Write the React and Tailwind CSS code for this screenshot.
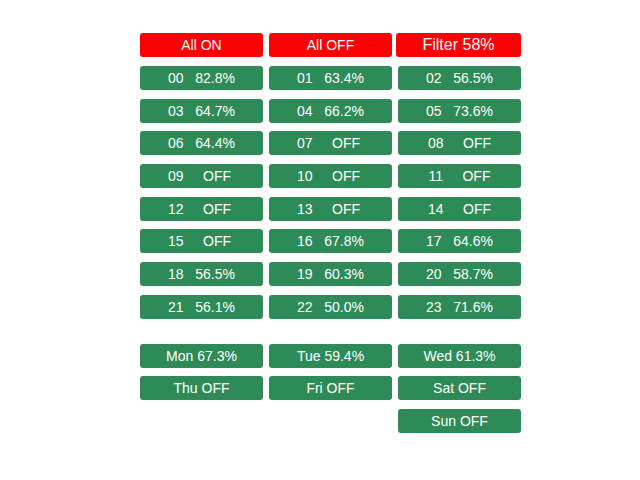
const hours = [
  ["00", "82.8%"], ["01", "63.4%"], ["02", "56.5%"],
  ["03", "64.7%"], ["04", "66.2%"], ["05", "73.6%"],
  ["06", "64.4%"], ["07", "OFF"], ["08", "OFF"],
  ["09", "OFF"], ["10", "OFF"], ["11", "OFF"],
  ["12", "OFF"], ["13", "OFF"], ["14", "OFF"],
  ["15", "OFF"], ["16", "67.8%"], ["17", "64.6%"],
  ["18", "56.5%"], ["19", "60.3%"], ["20", "58.7%"],
  ["21", "56.1%"], ["22", "50.0%"], ["23", "71.6%"],
];

const days = [
  "Mon 67.3%", "Tue 59.4%", "Wed 61.3%",
  "Thu OFF", "Fri OFF", "Sat OFF",
];

// label padding: percentages get 3 spaces, OFF gets a wider gap
function hourLabel(num, val, col) {
  if (val === "OFF") {
    return col === 2 ? `${num}     OFF` : `${num}     OFF `;
  }
  return `${num}   ${val}`;
}

const Cell = ({ children }) => (
  <div className="h-[24px] rounded-[3px] bg-[#2e8b57] text-white text-[14px] leading-none flex items-center justify-center whitespace-pre">
    {children}
  </div>
);

const App = () => {
  return (
    <div className="w-[640px] h-[480px] bg-white pt-[33px] pl-[140px] font-['Liberation_Sans',Arial,sans-serif]">
      {/* Top controls */}
      <div className="grid grid-cols-[123px_123px_123px] gap-x-[6px]">
        <button className="h-[24px] rounded-[3px] bg-[#ff0000] text-white text-[14px] leading-none flex items-center justify-center">
          All ON
        </button>
        <button className="h-[24px] rounded-[3px] bg-[#ff0000] text-white text-[14px] leading-none flex items-center justify-center">
          All OFF
        </button>
        <button className="h-[24px] -ml-[2px] rounded-[3px] bg-[#ff0000] text-white text-[16px] leading-none flex items-center justify-center">
          Filter 58%
        </button>
      </div>

      {/* Hours */}
      <div className="grid grid-cols-[123px_123px_123px] gap-x-[6px] gap-y-[8.7px] mt-[9px]">
        {hours.map(([num, val], i) => (
          <Cell key={num}>{hourLabel(num, val, i % 3)}</Cell>
        ))}
      </div>

      {/* Days */}
      <div className="grid grid-cols-[123px_123px_123px] gap-x-[6px] gap-y-[8.4px] mt-[25px]">
        {days.map((d) => (
          <Cell key={d}>{d}</Cell>
        ))}
        <div />
        <div />
        <Cell>Sun OFF</Cell>
      </div>
    </div>
  );
};

export default App;
